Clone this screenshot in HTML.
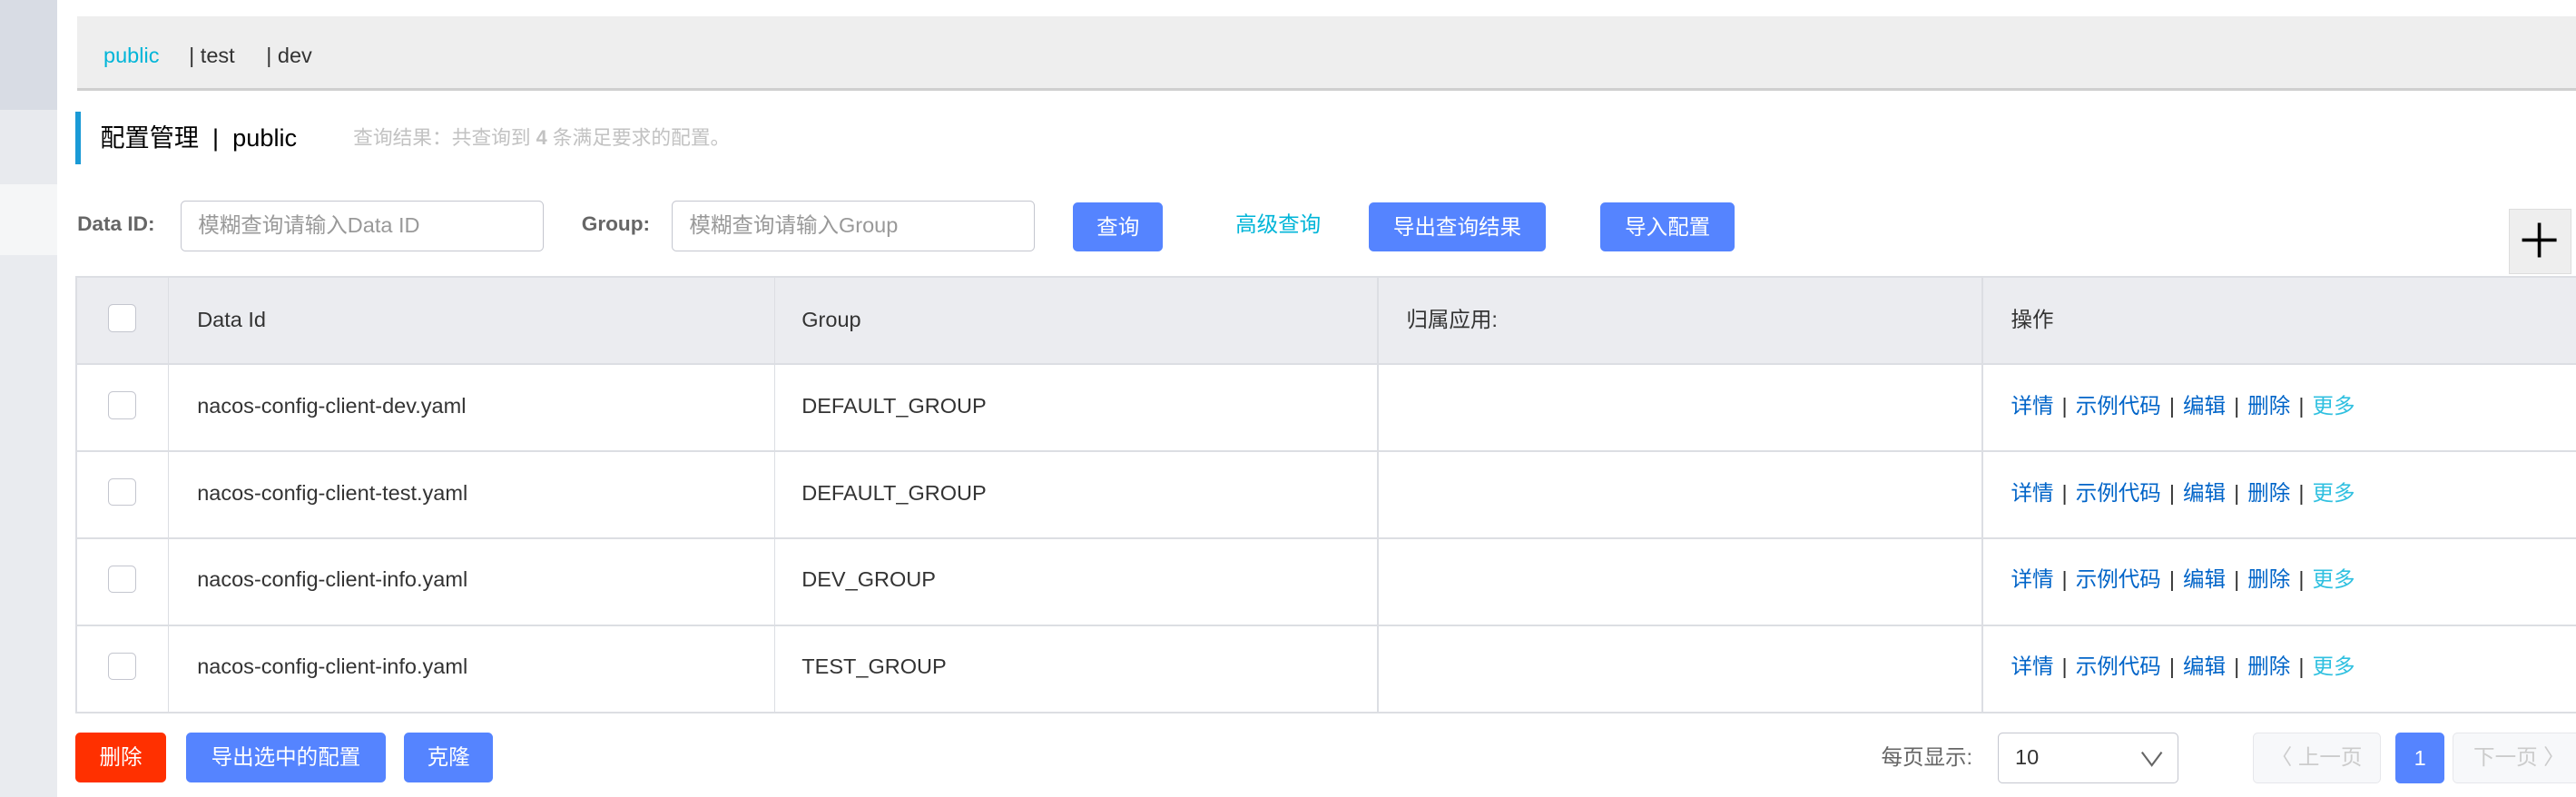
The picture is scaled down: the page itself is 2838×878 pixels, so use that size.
<!DOCTYPE html>
<html><head><meta charset="utf-8"><style>
*{box-sizing:border-box;margin:0;padding:0}
html,body{width:2838px;height:878px;overflow:hidden;background:#fff}
#root{zoom:1.81;width:1568px;height:485px;position:relative;font-family:"Liberation Sans","Noto Sans CJK SC",sans-serif;font-size:13px;line-height:16px;color:#333}
.a{position:absolute;white-space:nowrap}
.sb{left:0;width:35px}
.btn{position:absolute;height:30px;line-height:30px;text-align:center;color:#fff;background:#5584ff;border-radius:3px;font-size:13px}
.inp{position:absolute;height:31px;border:1px solid #c4c6cf;border-radius:3px;color:#999;font-size:13px;line-height:29px;padding-left:10px}
.cb{position:absolute;left:66px;width:17px;height:17px;border:1px solid #c4c6cf;border-radius:3px;background:#fff}
.vl{position:absolute;width:1px;background:#dcdee3;top:169px;height:265px}
.hl{position:absolute;left:46px;right:0;height:1px;background:#dcdee3}
.ops{position:absolute;left:1224px;color:#0064c8}
.ops span{color:#333;margin:0 5px}
.ops b{font-weight:normal;color:#30c0e0}
</style></head><body><div id="root">
<div class="a sb" style="top:0;height:67px;background:#d8dce4"></div>
<div class="a sb" style="top:67px;height:45px;background:#e8eaee"></div>
<div class="a sb" style="top:112px;height:43px;background:#f5f6f7"></div>
<div class="a sb" style="top:155px;height:330px;background:#e9ebef"></div>

<div class="a" style="left:47px;right:0;top:10px;height:45px;background:#eeeeee;border-bottom:2px solid #cfcfcf"></div>
<div class="a" style="left:63px;top:26px;color:#00b5d8">public</div>
<div class="a" style="left:115px;top:26px;color:#333">| test</div>
<div class="a" style="left:162px;top:26px;color:#333">| dev</div>

<div class="a" style="left:46px;top:68px;width:3px;height:32px;background:#1a9ad6"></div>
<div class="a" style="left:61px;top:76px;font-size:15px;color:#000">配置管理 &nbsp;|&nbsp; public</div>
<div class="a" style="left:215px;top:76px;font-size:12px;color:#c2c2c2">查询结果：共查询到 <b>4</b> 条满足要求的配置。</div>

<div class="a" style="left:47px;top:129px;font-weight:bold;color:#666;font-size:12.5px">Data ID:</div>
<div class="inp" style="left:110px;top:122px;width:221px">模糊查询请输入Data ID</div>
<div class="a" style="left:354px;top:129px;font-weight:bold;color:#666;font-size:12.5px">Group:</div>
<div class="inp" style="left:409px;top:122px;width:221px">模糊查询请输入Group</div>
<div class="btn" style="left:653px;top:123px;width:55px">查询</div>
<div class="a" style="left:752px;top:129px;color:#00b5d8">高级查询</div>
<div class="btn" style="left:833px;top:123px;width:108px">导出查询结果</div>
<div class="btn" style="left:974px;top:123px;width:82px">导入配置</div>
<div class="a" style="left:1527px;top:127px;width:38px;height:40px;background:#eee;border:1px solid #ddd">
<svg width="36" height="38" viewBox="0 0 36 38"><path d="M18 8V29M7.5 18.5H28.5" stroke="#000" stroke-width="2"/></svg></div>

<div class="a" style="left:46px;right:0;top:169px;height:52px;background:#ebecf0"></div>
<div class="hl" style="top:168px"></div><div class="hl" style="top:221px"></div>
<div class="hl" style="top:274px"></div><div class="hl" style="top:327px"></div>
<div class="hl" style="top:380px"></div><div class="hl" style="top:433px"></div>
<div class="vl" style="left:46px"></div><div class="vl" style="left:102px"></div>
<div class="vl" style="left:471px"></div><div class="vl" style="left:838px"></div><div class="vl" style="left:1206px"></div>
<div class="cb" style="top:185px"></div>
<div class="a" style="left:120px;top:187px">Data Id</div>
<div class="a" style="left:488px;top:187px">Group</div>
<div class="a" style="left:856px;top:187px">归属应用:</div>
<div class="a" style="left:1224px;top:187px">操作</div>

<div class="cb" style="top:238px"></div>
<div class="a" style="left:120px;top:239px">nacos-config-client-dev.yaml</div>
<div class="a" style="left:488px;top:239px">DEFAULT_GROUP</div>
<div class="ops" style="top:239px">详情<span>|</span>示例代码<span>|</span>编辑<span>|</span>删除<span>|</span><b>更多</b></div>

<div class="cb" style="top:291px"></div>
<div class="a" style="left:120px;top:292px">nacos-config-client-test.yaml</div>
<div class="a" style="left:488px;top:292px">DEFAULT_GROUP</div>
<div class="ops" style="top:292px">详情<span>|</span>示例代码<span>|</span>编辑<span>|</span>删除<span>|</span><b>更多</b></div>

<div class="cb" style="top:344px"></div>
<div class="a" style="left:120px;top:345px">nacos-config-client-info.yaml</div>
<div class="a" style="left:488px;top:345px">DEV_GROUP</div>
<div class="ops" style="top:345px">详情<span>|</span>示例代码<span>|</span>编辑<span>|</span>删除<span>|</span><b>更多</b></div>

<div class="cb" style="top:397px"></div>
<div class="a" style="left:120px;top:398px">nacos-config-client-info.yaml</div>
<div class="a" style="left:488px;top:398px">TEST_GROUP</div>
<div class="ops" style="top:398px">详情<span>|</span>示例代码<span>|</span>编辑<span>|</span>删除<span>|</span><b>更多</b></div>

<div class="btn" style="left:46px;top:446px;width:55px;background:#ff3000">删除</div>
<div class="btn" style="left:113px;top:446px;width:122px">导出选中的配置</div>
<div class="btn" style="left:246px;top:446px;width:54px">克隆</div>

<div class="a" style="left:1145px;top:453px;color:#666">每页显示:</div>
<div class="a" style="left:1216px;top:446px;width:110px;height:31px;border:1px solid #c4c6cf;border-radius:3px;line-height:29px;padding-left:10px;color:#333">10
<svg class="a" style="left:86px;top:9px" width="14" height="12" viewBox="0 0 14 12"><path d="M1 2L7 10L13 2" fill="none" stroke="#666" stroke-width="1.2"/></svg></div>
<div class="a" style="left:1371px;top:446px;width:78px;height:31px;border:1px solid #e6e7eb;border-radius:3px;background:#f7f8fa;color:#ccc;line-height:29px;text-align:center">〈 上一页</div>
<div class="btn" style="left:1458px;top:446px;width:30px;height:31px;line-height:31px">1</div>
<div class="a" style="left:1493px;top:446px;width:80px;height:31px;border:1px solid #e6e7eb;border-radius:3px;background:#f7f8fa;color:#ccc;line-height:29px;padding-left:12px">下一页 〉</div>
</div></body></html>
